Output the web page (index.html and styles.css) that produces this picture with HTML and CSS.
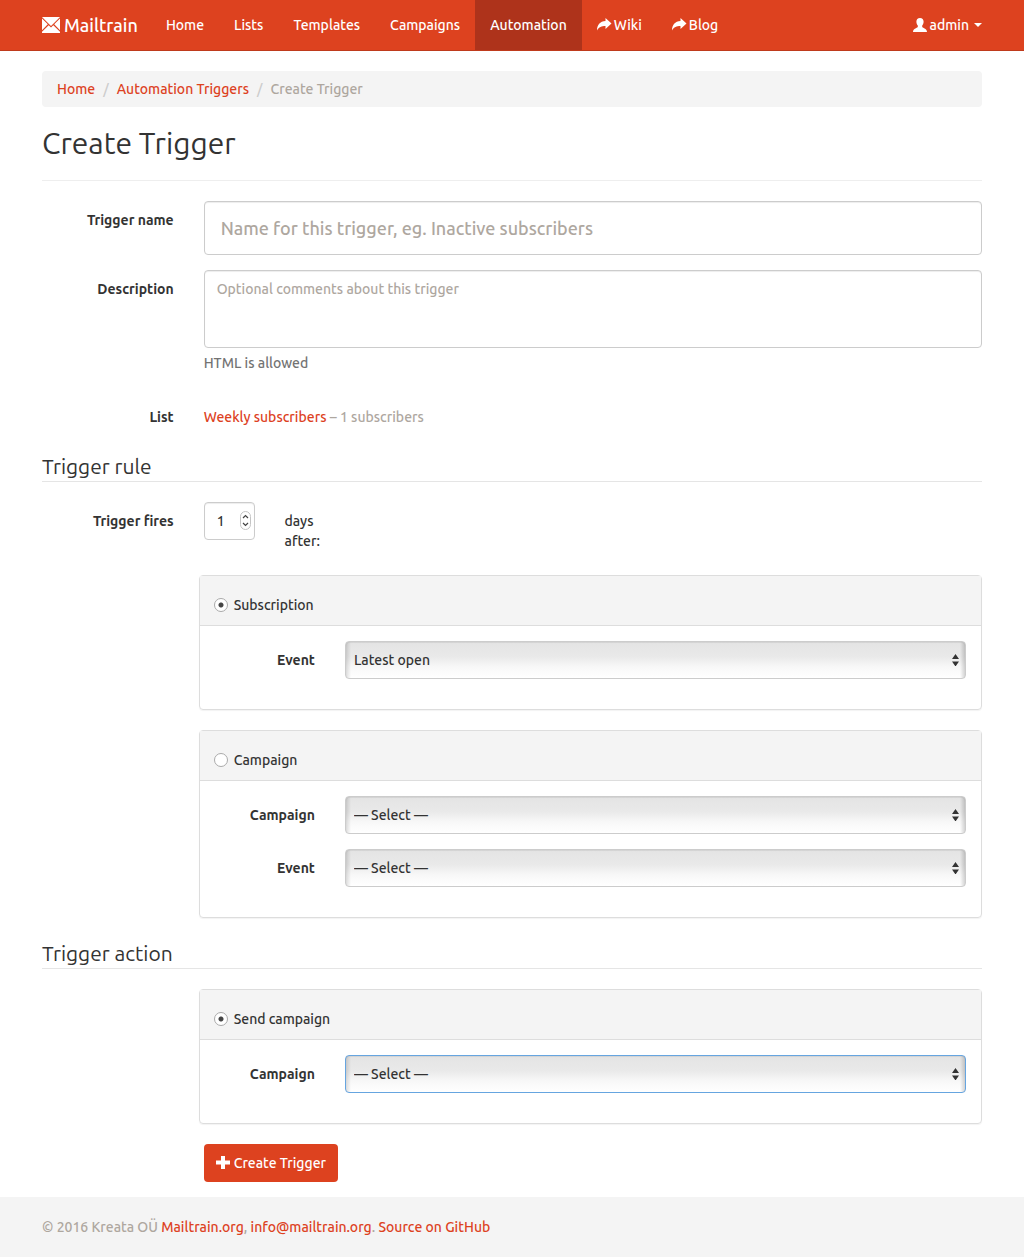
FILE: index.html
```html
<!DOCTYPE html>
<html lang="en">
<head>
<meta charset="utf-8">
<meta name="viewport" content="width=device-width, initial-scale=1">
<title>Create Trigger – Mailtrain</title>
<link rel="stylesheet" href="styles.css">
</head>
<body>
<header class="navbar">
  <nav class="container navbar-inner">
    <a class="brand" href="#"><svg class="icon icon-lg" viewBox="0 0 18 16" aria-hidden="true"><path d="M0 0h18L9 9zM0 1.500l5.800 5.800L0 13.200zM18 1.500v11.700l-5.800-5.900zM0 16v-1.200l6.700-6.600L9 10.500l2.300-2.300L18 14.800V16z"/></svg>Mailtrain</a>
    <ul class="nav">
      <li><a href="#">Home</a></li>
      <li><a href="#">Lists</a></li>
      <li><a href="#">Templates</a></li>
      <li><a href="#">Campaigns</a></li>
      <li><a class="active" href="#">Automation</a></li>
      <li><a href="#"><svg class="icon" viewBox="0 0 14 14" aria-hidden="true"><path d="M8.500 0L14.500 5.500 8.500 11V8C4.500 8 2 9 0 12.500 0 7 3 3.200 8.500 3z"/></svg>Wiki</a></li>
      <li><a href="#"><svg class="icon" viewBox="0 0 14 14" aria-hidden="true"><path d="M8.500 0L14.500 5.500 8.500 11V8C4.500 8 2 9 0 12.500 0 7 3 3.200 8.500 3z"/></svg>Blog</a></li>
    </ul>
    <ul class="nav nav-right">
      <li><a href="#"><svg class="icon" viewBox="0 0 14 14" aria-hidden="true"><path d="M7 0c2.300 0 3.600 1.500 3.600 3.600 0 1.600-.5 3-1.400 4v1.500c0 .7 4.800 1.500 4.800 4.900H0c0-3.400 4.800-4.200 4.800-4.900V7.600c-.9-1-1.400-2.400-1.400-4C3.400 1.500 4.700 0 7 0z"/></svg>admin<span class="caret"></span></a></li>
    </ul>
  </nav>
</header>

<main class="container">
  <ol class="breadcrumb">
    <li><a href="#">Home</a></li>
    <li><a href="#">Automation Triggers</a></li>
    <li class="current">Create Trigger</li>
  </ol>

  <h1>Create Trigger</h1>
  <hr>

  <form>
    <div class="row">
      <label class="label" for="name">Trigger name</label>
      <div class="field"><input class="control control-lg" id="name" type="text" placeholder="Name for this trigger, eg. Inactive subscribers"></div>
    </div>
    <div class="row">
      <label class="label" for="description">Description</label>
      <div class="field">
        <textarea class="control" id="description" rows="3" placeholder="Optional comments about this trigger"></textarea>
        <p class="help">HTML is allowed</p>
      </div>
    </div>
    <div class="row">
      <span class="label">List</span>
      <div class="field static"><a href="#">Weekly subscribers</a> <span class="muted">– 1 subscribers</span></div>
    </div>

    <fieldset>
      <legend>Trigger rule</legend>
      <div class="row">
        <label class="label" for="days">Trigger fires</label>
        <div class="field field-sm"><input class="control number" id="days" type="number" value="1"></div>
        <div class="field field-sm static">days after:</div>
      </div>

      <section class="panel">
        <div class="panel-head"><label class="radio"><input type="radio" name="rule" checked>Subscription</label></div>
        <div class="panel-body">
          <div class="row">
            <label class="label" for="subscription-event">Event</label>
            <div class="field"><select class="control select" id="subscription-event"><option>Latest open</option></select></div>
          </div>
        </div>
      </section>

      <section class="panel">
        <div class="panel-head"><label class="radio"><input type="radio" name="rule">Campaign</label></div>
        <div class="panel-body">
          <div class="row">
            <label class="label" for="campaign">Campaign</label>
            <div class="field"><select class="control select" id="campaign"><option>— Select —</option></select></div>
          </div>
          <div class="row">
            <label class="label" for="campaign-event">Event</label>
            <div class="field"><select class="control select" id="campaign-event"><option>— Select —</option></select></div>
          </div>
        </div>
      </section>
    </fieldset>

    <fieldset>
      <legend>Trigger action</legend>
      <section class="panel">
        <div class="panel-head"><label class="radio"><input type="radio" name="action" checked>Send campaign</label></div>
        <div class="panel-body">
          <div class="row">
            <label class="label" for="send-campaign">Campaign</label>
            <div class="field"><select class="control select highlighted" id="send-campaign"><option>— Select —</option></select></div>
          </div>
        </div>
      </section>
    </fieldset>

    <div class="row">
      <div class="field offset"><button class="btn" type="submit"><svg class="icon" viewBox="0 0 14 14" aria-hidden="true"><path d="M5 0h4v4.500h5v4H9V13H5V8.500H0v-4h5z"/></svg>Create Trigger</button></div>
    </div>
  </form>
</main>

<footer class="footer">
  <p class="container">© 2016 Kreata OÜ <a href="#">Mailtrain.org</a>, <a href="#">info@mailtrain.org</a>. <a href="#">Source on GitHub</a></p>
</footer>
</body>
</html>
```
FILE: styles.css
```css
:root {
  --brand: #dd421f;
  --brand-dark: #ae331b;
  --muted: #aea79f;
  --text: #333;
  --panel: #f4f4f4;
  --border: #ccc;
}

* { box-sizing: border-box; }

body {
  margin: 0;
  min-height: 100vh;
  display: flex;
  flex-direction: column;
  background: #fff;
  color: var(--text);
  font: 500 14px/20px "Ubuntu", "Noto Sans", "Open Sans", sans-serif;
}

input, select, textarea, button { font: inherit; color: inherit; }
a { color: var(--brand); text-decoration: none; }
p, ul, ol { margin: 0; padding: 0; list-style: none; }

.container {
  width: 100%;
  max-width: 970px;
  margin: 0 auto;
  padding: 0 15px;
}

.icon { width: 14px; height: 14px; fill: currentColor; flex: none; overflow: visible; }
.icon-lg { width: 18px; height: 16px; }

/* Navigation */
.navbar {
  background: var(--brand);
  border-bottom: 1px solid #bf3a1c;
  margin-bottom: 20px;
}
.navbar-inner { display: flex; }
.navbar a { color: #fff; display: flex; align-items: center; height: 50px; }
.brand { gap: 4px; margin-right: 13px; font-size: 18px; }
.nav { display: flex; }
.nav a { padding: 0 15px; gap: 3px; }
.nav .active { background: var(--brand-dark); }
.nav-right { margin-left: auto; margin-right: -15px; }
.caret {
  margin-left: 2px;
  border: 4px solid transparent;
  border-top-color: currentColor;
  border-bottom: 0;
}

.breadcrumb {
  display: flex;
  padding: 8px 15px;
  margin-bottom: 20px;
  background: var(--panel);
  border-radius: 4px;
}
.breadcrumb li + li::before { content: "/"; padding: 0 8px; color: #ccc; }
.current, .muted { color: var(--muted); }

h1 { margin: 0; font-size: 30px; line-height: 33px; font-weight: 400; }
hr { margin: 20px 0; border: 0; border-top: 1px solid #eee; }

/* Form grid */
.row {
  display: grid;
  grid-template-columns: repeat(12, minmax(0, 1fr));
  margin: 0 -15px 15px;
}
.label {
  grid-column: span 2;
  padding: 9px 15px 0;
  text-align: right;
  font-weight: 700;
}
.field { grid-column: span 10; padding: 0 15px; }
.field-sm { grid-column: span 1; }
.offset { grid-column: 3 / span 10; }
.static { padding-top: 9px; padding-bottom: 9px; }

.control {
  display: block;
  width: 100%;
  height: 38px;
  padding: 8px 12px;
  border: 1px solid var(--border);
  border-radius: 4px;
  background: #fff;
  box-shadow: inset 0 1px 1px rgba(0, 0, 0, .075);
}
.control::placeholder { color: var(--muted); opacity: 1; }
.control-lg { height: 54px; padding: 14px 16px; font-size: 18px; line-height: 24px; }
textarea.control { height: 78px; resize: none; }
.help { margin: 5px 0 10px; color: #737373; }

.number {
  appearance: textfield;
  padding-right: 16px;
  background: #fff url("data:image/svg+xml,%3Csvg xmlns='http://www.w3.org/2000/svg' width='11' height='20' fill='none'%3E%3Crect x='.5' y='.5' width='10' height='18' rx='5' stroke='%23c4c4c4'/%3E%3Cpath d='M3 7l2.500-2.500L8 7M3 12l2.500 2.500L8 12' stroke='%23444' stroke-width='1.200'/%3E%3C/svg%3E") no-repeat right 3px center;
}
.number::-webkit-inner-spin-button { appearance: none; margin: 0; }

.select {
  appearance: none;
  padding: 8px;
  background:
    url("data:image/svg+xml,%3Csvg xmlns='http://www.w3.org/2000/svg' width='7' height='12'%3E%3Cpath d='M0 5l3.500-5L7 5zM0 7.500h7l-3.500 5z' fill='%23333'/%3E%3C/svg%3E") no-repeat right 6px center,
    linear-gradient(90deg, rgba(0, 0, 0, .13), transparent 5px calc(100% - 5px), rgba(0, 0, 0, .16)),
    linear-gradient(#e4e4e4, #e9e9e9 40%, #f8f8f8 70%, #fff);
}
.highlighted { border-color: #66a5e0; }

fieldset { margin: 0; padding: 0; border: 0; min-width: 0; }
legend {
  display: block;
  width: 100%;
  margin-bottom: 20px;
  padding: 0;
  border-bottom: 1px solid #e5e5e5;
  font-size: 21px;
  font-weight: 400;
  line-height: 30px;
}

.panel {
  margin: 0 0 20px calc(100% / 6);
  border: 1px solid #ddd;
  border-radius: 4px;
  box-shadow: 0 1px 1px rgba(0, 0, 0, .05);
}
.panel-head { padding: 19px 14px 10px; background: var(--panel); border-bottom: 1px solid #ddd; }
.panel-body { padding: 15px; }

.radio { display: flex; align-items: center; gap: 6px; }
.radio input {
  appearance: none;
  width: 14px;
  height: 14px;
  margin: 0;
  border: 1px solid #aaa;
  border-radius: 50%;
  background: #fff;
}
.radio input:checked { background: radial-gradient(circle, #444 2px, #fff 3px); }

.btn {
  display: flex;
  align-items: center;
  gap: 4px;
  height: 38px;
  padding: 0 12px;
  border: 0;
  border-radius: 4px;
  background: var(--brand);
  color: #fff;
}

.footer { margin-top: auto; padding: 20px 0; background: var(--panel); color: var(--muted); }
```
